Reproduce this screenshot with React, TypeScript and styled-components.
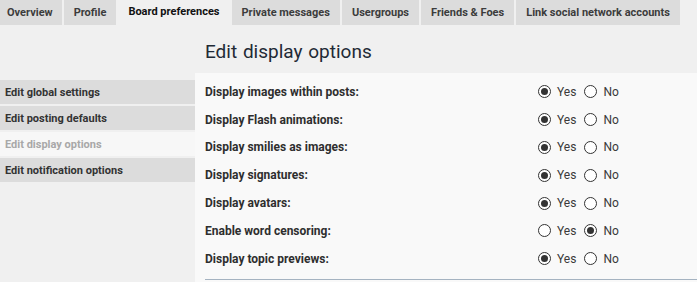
import React, { FC } from 'react'
import styled, { createGlobalStyle } from 'styled-components'

const GlobalStyle = createGlobalStyle`
  html, body {
    margin: 0;
    padding: 0;
    background: #f0f0f0;
    font-family: Roboto, "Liberation Sans", Arial, sans-serif;
  }
`

// tabs
const TabBar = styled('ul')`
  display: flex;
  margin: 0;
  padding: 0;
  list-style: none;
  height: 25px;
  gap: 2px;
`
const Tab = styled('li')<{ $active?: boolean }>`
  display: flex;
  align-items: center;
  padding: 0 10px;
  padding-bottom: ${(p) => (p.$active ? '3px' : '0')};
  background: ${(p) => (p.$active ? '#f0f0f0' : '#dcdcdc')};
  color: ${(p) => (p.$active ? '#111' : '#3c3c3c')};
  font-size: 11px;
  font-weight: bold;
  white-space: nowrap;

  &:first-child {
    padding-left: 7px;
    padding-right: 9px;
  }
`

// body
const Layout = styled('div')`
  display: grid;
  grid-template-columns: 195px 1fr;
`
const Menu = styled('ul')`
  margin: 0;
  padding: 55px 0 0;
  list-style: none;
  display: flex;
  flex-direction: column;
  gap: 2px;
`
const MenuItem = styled('li')<{ $active?: boolean }>`
  height: 24px;
  display: flex;
  align-items: center;
  padding-left: 5px;
  background: ${(p) => (p.$active ? '#f7f7f7' : '#dcdcdc')};
  color: ${(p) => (p.$active ? '#a8a8a8' : '#333')};
  font-size: 11px;
  font-weight: bold;
`
const Main = styled('div')`
  display: flex;
  flex-direction: column;
`
const Heading = styled('h2')`
  margin: 0;
  height: 48px;
  box-sizing: border-box;
  padding: 4px 0 0 10px;
  display: flex;
  align-items: center;
  font-size: 19px;
  font-weight: normal;
  color: #1f2a35;
  word-spacing: 1px;
`
const Panel = styled('div')`
  background: #f9f9f9;
  padding: 5px 0 0 10px;
  height: 209px;
`
const OptionList = styled('dl')`
  margin: 0;
  padding-bottom: 6px;
  border-bottom: 1px solid #a5b3c1;
`
const Row = styled('div')`
  display: grid;
  grid-template-columns: 333px 1fr;
  align-items: center;
  height: 27.8px;
`
const Label = styled('dt')`
  margin: 0;
  font-size: 12px;
  font-weight: bold;
  color: #2e2e2e;
`
const Choices = styled('dd')`
  margin: 0;
  display: flex;
  align-items: center;
  font-size: 12px;
  color: #3a3a3a;
`
const Choice = styled('label')`
  display: flex;
  align-items: center;
  gap: 6px;
  margin-right: 8px;
`
const Radio = styled('span')<{ $checked?: boolean }>`
  box-sizing: border-box;
  width: 13px;
  height: 13px;
  border-radius: 50%;
  border: 1px solid #333;
  background: #fff;
  display: flex;
  align-items: center;
  justify-content: center;

  &::after {
    content: '';
    width: 7px;
    height: 7px;
    border-radius: 50%;
    background: ${(p) => (p.$checked ? '#333' : 'transparent')};
  }
`

const tabs = [
  'Overview',
  'Profile',
  'Board preferences',
  'Private messages',
  'Usergroups',
  'Friends & Foes',
  'Link social network accounts',
]

const menu = [
  'Edit global settings',
  'Edit posting defaults',
  'Edit display options',
  'Edit notification options',
]

const options: [string, boolean][] = [
  ['Display images within posts:', true],
  ['Display Flash animations:', true],
  ['Display smilies as images:', true],
  ['Display signatures:', true],
  ['Display avatars:', true],
  ['Enable word censoring:', false],
  ['Display topic previews:', true],
]

const App: FC = () => (
  <>
    <GlobalStyle />
    <TabBar>
      {tabs.map((t) => (
        <Tab key={t} $active={t === 'Board preferences'}>
          {t}
        </Tab>
      ))}
    </TabBar>
    <Layout>
      <Menu>
        {menu.map((m) => (
          <MenuItem key={m} $active={m === 'Edit display options'}>
            {m}
          </MenuItem>
        ))}
      </Menu>
      <Main>
        <Heading>Edit display options</Heading>
        <Panel>
          <OptionList>
            {options.map(([label, yes]) => (
              <Row key={label}>
                <Label>{label}</Label>
                <Choices>
                  <Choice>
                    <Radio $checked={yes} />
                    Yes
                  </Choice>
                  <Choice>
                    <Radio $checked={!yes} />
                    No
                  </Choice>
                </Choices>
              </Row>
            ))}
          </OptionList>
        </Panel>
      </Main>
    </Layout>
  </>
)

export default App
